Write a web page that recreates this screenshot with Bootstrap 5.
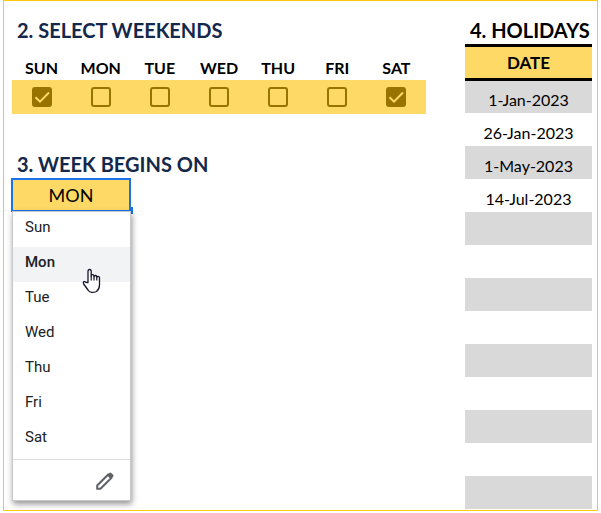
<!DOCTYPE html>
<html lang="en">
<head>
<meta charset="utf-8">
<meta name="viewport" content="width=device-width, initial-scale=1">
<title>Calendar settings</title>
<link rel="stylesheet" href="https://cdn.jsdelivr.net/npm/bootstrap@5.3.0/dist/css/bootstrap.min.css">
<style>
  body { font-family: Lato, "Liberation Sans", sans-serif; color: #000; background: #fff; }
  .sheet { border: 1px solid #ffc90e; margin: 0 3px 2px; padding: 0 5px 1px 8px; gap: 39px; }
  .sheet-title { font-size: 20px; line-height: 24px; font-weight: 700; color: #14284b; padding: 17px 0 0 5px; margin: 0; }
  .days { display: grid; grid-template-columns: repeat(7, 1fr); margin-top: 14px; }
  .day label { font-size: 16px; line-height: 22px; font-weight: 700; }
  .day .tick { background: #ffd966; height: 34px; width: 100%; }
  .tick .form-check-input { width: 20px; height: 20px; margin: 0; border: 2px solid #997300; border-radius: 3px; background-color: transparent; box-shadow: none; }
  .tick .form-check-input:checked { background-color: #997300; background-size: 20px 20px; background-position: center;
    background-image: url("data:image/svg+xml,%3Csvg xmlns='http://www.w3.org/2000/svg' viewBox='0 0 20 20'%3E%3Cpath d='M3.5 10.2l4.5 4.5 9-9.2' fill='none' stroke='%23ffd966' stroke-width='2'/%3E%3C/svg%3E"); }
  .week-title { padding-top: 38px; }
  .picker { width: 120px; margin: 2px 0 0 -1px; }
  .picker select { appearance: none; display: block; width: 100%; height: 34px; padding: 0; border: 2px solid #1a73e8; border-radius: 0; background: #ffd966; color: #000; font-size: 18px; text-align: center; text-align-last: center; outline: 0; }
  .fill-handle { position: absolute; right: -2px; top: 29px; width: 3px; height: 7px; background: #1a73e8; }
  .day-menu { position: absolute; left: 1px; top: 33px; width: 119px; background: #fff; border: 1px solid #c6c8ca; box-shadow: 1px 3px 6px rgba(0,0,0,.42); font-family: Roboto, sans-serif; }
  .day-menu .dropdown-item { font-size: 15px; line-height: 20px; height: 35px; padding: 0 12px 6px; color: #202124; }
  .day-menu .dropdown-item.current { background: #f1f3f4; font-weight: 500; }
  .menu-foot { border-top: 1px solid #dadce0; margin-top: 2px; height: 41px; padding: 1px 15px 0 0; }
  .pointer { position: absolute; left: 71px; top: 90px; pointer-events: none; }
  .holidays { flex: 0 0 127px; }
  .holidays .sheet-title { color: #000; padding: 17px 0 0 5px; white-space: nowrap; }
  .holidays table { width: 100%; margin-top: 2px; border-collapse: separate; border-spacing: 0; text-align: center; }
  .holidays th { height: 37px; padding: 0; border: solid #000; border-width: 3px 0; background: #ffd966; font-size: 17px; line-height: 24px; }
  .holidays td { height: 33px; padding: 6px 0 0; font-size: 16px; line-height: 22px; }
  .holidays tbody tr:first-child td { height: 32px; }
  .holidays tbody tr:nth-child(odd) td { background: #d9d9d9; }
</style>
<script src="https://cdn.jsdelivr.net/npm/bootstrap@5.3.0/dist/js/bootstrap.bundle.min.js"></script>
</head>
<body>
<main class="sheet d-flex">
  <div class="flex-grow-1">
    <section>
      <h2 class="sheet-title">2. SELECT WEEKENDS</h2>
      <div class="days">
        <div class="day text-center"><label for="d0">SUN</label><div class="tick d-flex align-items-center justify-content-center"><input class="form-check-input" type="checkbox" id="d0" checked></div></div>
        <div class="day text-center"><label for="d1">MON</label><div class="tick d-flex align-items-center justify-content-center"><input class="form-check-input" type="checkbox" id="d1"></div></div>
        <div class="day text-center"><label for="d2">TUE</label><div class="tick d-flex align-items-center justify-content-center"><input class="form-check-input" type="checkbox" id="d2"></div></div>
        <div class="day text-center"><label for="d3">WED</label><div class="tick d-flex align-items-center justify-content-center"><input class="form-check-input" type="checkbox" id="d3"></div></div>
        <div class="day text-center"><label for="d4">THU</label><div class="tick d-flex align-items-center justify-content-center"><input class="form-check-input" type="checkbox" id="d4"></div></div>
        <div class="day text-center"><label for="d5">FRI</label><div class="tick d-flex align-items-center justify-content-center"><input class="form-check-input" type="checkbox" id="d5"></div></div>
        <div class="day text-center"><label for="d6">SAT</label><div class="tick d-flex align-items-center justify-content-center"><input class="form-check-input" type="checkbox" id="d6" checked></div></div>
      </div>
    </section>
    <section>
      <h2 class="sheet-title week-title"><label for="begin">3. WEEK BEGINS ON</label></h2>
      <div class="picker position-relative">
        <select id="begin"><option>SUN</option><option selected>MON</option><option>TUE</option><option>WED</option><option>THU</option><option>FRI</option><option>SAT</option></select>
        <span class="fill-handle"></span>
        <div class="day-menu">
          <button type="button" class="dropdown-item">Sun</button>
          <button type="button" class="dropdown-item current">Mon</button>
          <button type="button" class="dropdown-item">Tue</button>
          <button type="button" class="dropdown-item">Wed</button>
          <button type="button" class="dropdown-item">Thu</button>
          <button type="button" class="dropdown-item">Fri</button>
          <button type="button" class="dropdown-item">Sat</button>
          <div class="menu-foot d-flex align-items-center justify-content-end">
            <button type="button" class="btn p-0 border-0 d-flex" aria-label="Edit">
              <svg width="20" height="20" viewBox="0 0 20 20"><path d="M2.2 17.8v-3.3L13 3.7l3.3 3.3L5.5 17.8z" fill="none" stroke="#5f6368" stroke-width="2"/><path d="M12 4.1l2.2-2.2q1-1 2 0l1.9 1.9q1 1 0 2L15.9 8z" fill="#5f6368"/></svg>
            </button>
          </div>
        </div>
        <svg class="pointer" width="20" height="26" viewBox="0 0 20 26"><path d="M6 14.500V3.200q0-1.700 1.600-1.700t1.600 1.700V8q0-1.300 1.400-1.300T12 8v.8q0-1.300 1.400-1.300t1.400 1.300v.8q0-1.300 1.300-1.300t1.400 1.500V17q0 4-3 6.500-2 1-5 .9-2.300-.3-3.500-2.400L1.700 16q-.9-1.700.3-2.300 1-.5 2 .7z" fill="#fff" stroke="#15152b" stroke-width="1.300" stroke-linejoin="round"/><path d="M9.200 8v4.500M12 8.500v4M14.800 9.500v3" stroke="#15152b" stroke-width="1.200"/></svg>
      </div>
    </section>
  </div>
  <section class="holidays">
    <h2 class="sheet-title" id="holidays-title">4. HOLIDAYS</h2>
    <table aria-labelledby="holidays-title">
      <thead><tr><th scope="col">DATE</th></tr></thead>
      <tbody>
        <tr><td>1-Jan-2023</td></tr>
        <tr><td>26-Jan-2023</td></tr>
        <tr><td>1-May-2023</td></tr>
        <tr><td>14-Jul-2023</td></tr>
        <tr><td></td></tr><tr><td></td></tr><tr><td></td></tr><tr><td></td></tr><tr><td></td></tr>
        <tr><td></td></tr><tr><td></td></tr><tr><td></td></tr><tr><td></td></tr>
      </tbody>
    </table>
  </section>
</main>
</body>
</html>
